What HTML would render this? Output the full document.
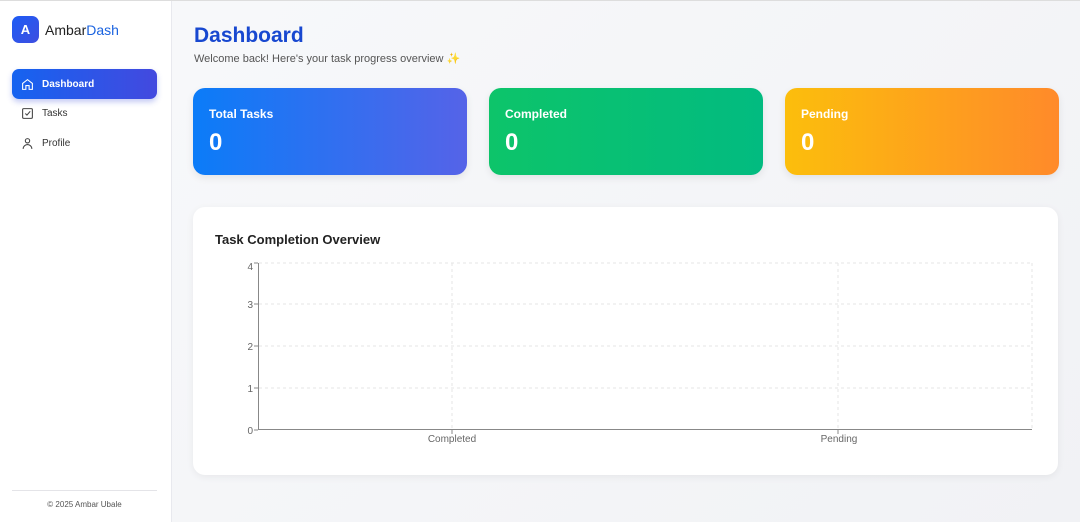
<!DOCTYPE html><html><head><style>
*{margin:0;padding:0;box-sizing:border-box}
body{width:1080px;height:522px;overflow:hidden;font-family:"Liberation Sans",sans-serif;background:linear-gradient(135deg,#f8f9fb,#f1f2f5);position:relative}
.topl{position:absolute;left:0;top:0;width:1080px;height:1px;background:#ddd;z-index:5}
.sb{position:absolute;left:0;top:1px;width:172px;height:521px;background:#fff;border-right:1px solid #e8e9ee}
.logo{position:absolute;left:12px;top:15px;width:27px;height:27px;border-radius:7px;background:linear-gradient(135deg,#1d5cf5,#3e4ee0);color:#fff;font-weight:bold;font-size:13px;text-align:center;line-height:27px}
.brand{position:absolute;left:45px;top:21px;font-size:14px;color:#222}
.brand span{color:#1a63e0}
.nav{position:absolute;left:12px;width:145px;height:30px;font-size:10px;color:#333;display:flex;align-items:center;padding-left:9px}
.nav svg{margin-right:8px}
.act{background:linear-gradient(90deg,#1563f0,#4349df);color:#fff;font-weight:bold;border-radius:7px;box-shadow:0 3px 6px rgba(60,80,220,.3)}
.foot{position:absolute;left:12px;width:145px;top:489px;border-top:1px solid #e4e4e8;text-align:center;font-size:8px;color:#555;padding-top:9px}
h1{position:absolute;left:194px;top:24px;font-size:21px;color:#1848d0}
.sub{position:absolute;left:194px;top:52px;font-size:11px;color:#555}
.card{position:absolute;top:88px;height:87px;width:274px;border-radius:12px;color:#fff;padding:19px 16px;box-shadow:0 3px 8px rgba(0,0,0,.08)}
.card .t{font-size:12px;font-weight:bold}
.card .v{font-size:24px;font-weight:bold;margin-top:8px}
.chart{position:absolute;left:193px;top:207px;width:865px;height:268px;background:#fff;border-radius:12px;box-shadow:0 2px 8px rgba(0,0,0,.06)}
.chart h3{position:absolute;left:22px;top:25px;font-size:13px;color:#222}
</style></head><body>
<div class="topl"></div>
<div class="sb">
<div class="logo">A</div><div class="brand">Ambar<span>Dash</span></div>
<div class="nav act" style="top:68px"><svg width="13" height="13" viewBox="0 0 24 24" fill="none" stroke="#fff" stroke-width="2"><path d="M3 10l9-7 9 7v11h-6v-7H9v7H3z"/></svg>Dashboard</div>
<div class="nav" style="top:97px"><svg width="13" height="13" viewBox="0 0 24 24" fill="none" stroke="#444" stroke-width="2"><rect x="3" y="3" width="18" height="18" rx="2"/><path d="M8 12l3 3 6-7"/></svg>Tasks</div>
<div class="nav" style="top:127px"><svg width="13" height="13" viewBox="0 0 24 24" fill="none" stroke="#444" stroke-width="2"><circle cx="12" cy="7" r="4"/><path d="M4 22c0-5 4-8 8-8s8 3 8 8"/></svg>Profile</div>
<div class="foot">© 2025 Ambar Ubale</div>
</div>
<h1>Dashboard</h1>
<div class="sub">Welcome back! Here's your task progress overview ✨</div>
<div class="card" style="left:193px;background:linear-gradient(90deg,#0b7cf8,#5563e8)"><div class="t">Total Tasks</div><div class="v">0</div></div>
<div class="card" style="left:489px;background:linear-gradient(90deg,#0dc46a,#02bb80)"><div class="t">Completed</div><div class="v">0</div></div>
<div class="card" style="left:785px;background:linear-gradient(90deg,#fcbe0c,#ff8a2a)"><div class="t">Pending</div><div class="v">0</div></div>
<div class="chart"><h3>Task Completion Overview</h3></div>
<svg style="position:absolute;left:0;top:0" width="1080" height="522" font-family="Liberation Sans" font-size="10" fill="#666">
<g stroke="#e6e6e6" stroke-dasharray="3 3"><line x1="259" y1="263" x2="1032" y2="263"/><line x1="259" y1="304" x2="1032" y2="304"/><line x1="259" y1="346" x2="1032" y2="346"/><line x1="259" y1="388" x2="1032" y2="388"/><line x1="452" y1="263" x2="452" y2="430"/><line x1="838" y1="263" x2="838" y2="430"/><line x1="1032" y1="263" x2="1032" y2="430"/></g>
<g stroke="#888"><line x1="258.5" y1="263" x2="258.5" y2="430"/><line x1="258" y1="429.5" x2="1032" y2="429.5"/><line x1="254" y1="263" x2="258" y2="263"/><line x1="254" y1="304" x2="258" y2="304"/><line x1="254" y1="346" x2="258" y2="346"/><line x1="254" y1="388" x2="258" y2="388"/><line x1="254" y1="430" x2="258" y2="430"/><line x1="452" y1="430" x2="452" y2="434"/><line x1="838" y1="430" x2="838" y2="434"/></g>
<text x="253" y="270" text-anchor="end">4</text><text x="253" y="308" text-anchor="end">3</text><text x="253" y="350" text-anchor="end">2</text><text x="253" y="392" text-anchor="end">1</text><text x="253" y="434" text-anchor="end">0</text>
<text x="452" y="442" text-anchor="middle">Completed</text><text x="839" y="442" text-anchor="middle">Pending</text>
</svg>
</body></html>
